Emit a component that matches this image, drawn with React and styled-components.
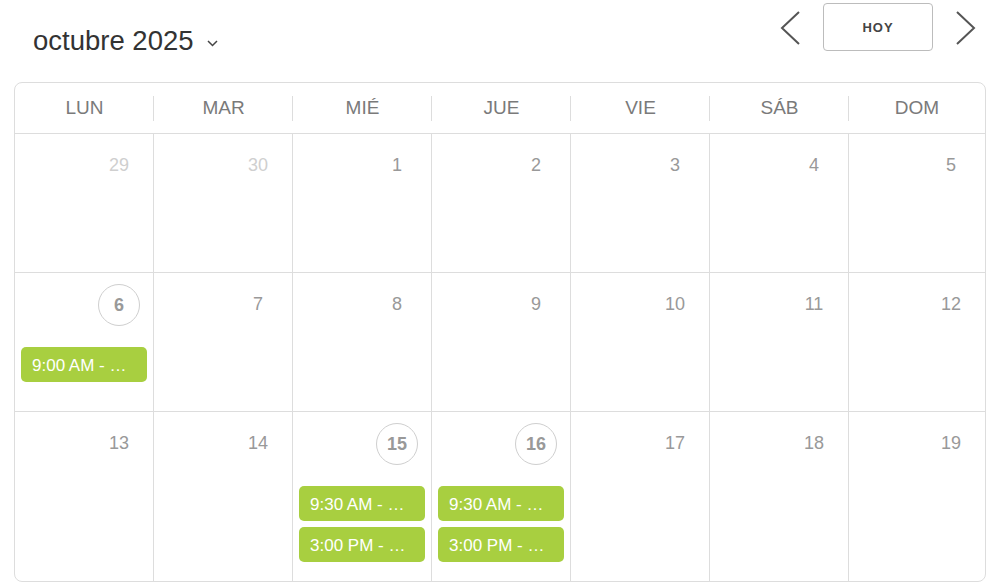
import React from "react";
import styled, { createGlobalStyle } from "styled-components";

const GlobalStyle = createGlobalStyle`
  body {
    margin: 0;
    background: #fff;
    font-family: "Liberation Sans", Arial, sans-serif;
  }
`;

// Page wrapper
const Page = styled.div`
  padding: 0 6px 0 14px;
`;

// Top bar with month title and navigation
const Toolbar = styled.div`
  display: flex;
  justify-content: space-between;
  align-items: flex-start;
  height: 82px;
  padding: 0 9px 0 19px;
`;

const MonthTitle = styled.div`
  display: flex;
  align-items: center;
  gap: 13px;
  margin-top: 25px;
  font-size: 27.5px;
  line-height: 32px;
  color: #333;
  cursor: pointer;

  svg {
    margin-top: 4px;
  }
`;

const Nav = styled.div`
  display: flex;
  align-items: center;
  gap: 22px;
  margin-top: 3px;
`;

const ArrowButton = styled.button`
  display: flex;
  padding: 0;
  border: none;
  background: none;
  cursor: pointer;
  margin-top: 2px;
`;

const TodayButton = styled.button`
  width: 110px;
  height: 48px;
  border: 1px solid #bcbcbc;
  border-radius: 4px;
  background: #fff;
  font-family: "Liberation Sans", Arial, sans-serif;
  font-size: 13px;
  font-weight: bold;
  letter-spacing: 1px;
  color: #444;
  cursor: pointer;
`;

// Calendar grid
const Calendar = styled.div`
  border: 1px solid #ddd;
  border-radius: 8px;
  overflow: hidden;
`;

const columns = "repeat(6, 139px) minmax(0, 1fr)";

const HeaderRow = styled.div`
  display: grid;
  grid-template-columns: ${columns};
  height: 50px;
  border-bottom: 1px solid #ddd;
`;

const HeaderCell = styled.div`
  position: relative;
  display: flex;
  align-items: center;
  justify-content: center;
  font-size: 19px;
  color: #7a7a7a;

  &:not(:first-child)::before {
    content: "";
    position: absolute;
    left: -1px;
    top: 13px;
    height: 25px;
    border-left: 1px solid #ddd;
  }
`;

const Week = styled.div`
  display: grid;
  grid-template-columns: ${columns};
  border-bottom: 1px solid #ddd;

  &:last-child {
    border-bottom: none;
  }
`;

const DayCell = styled.div`
  display: flex;
  flex-direction: column;
  min-width: 0;
  min-height: 138px;
  padding: 11px 6px 19px;
  box-sizing: border-box;
  border-right: 1px solid #ddd;

  &:last-child {
    border-right: none;
  }
`;

const DayNumber = styled.div`
  align-self: flex-end;
  display: flex;
  align-items: center;
  justify-content: center;
  width: 42px;
  height: 42px;
  margin-right: 7px;
  box-sizing: border-box;
  border-radius: 50%;
  font-size: 18px;
  color: ${(p) => (p.$muted ? "#cfcfcf" : "#999")};
  border: 1px solid ${(p) => (p.$busy ? "#cfcfcf" : "transparent")};
  font-weight: ${(p) => (p.$busy ? "bold" : "normal")};
  margin-top: ${(p) => (p.$busy ? "0" : "-1px")};
`;

const Events = styled.div`
  display: flex;
  flex-direction: column;
  gap: 6px;
  margin-top: 21px;
`;

const Event = styled.div`
  height: 35px;
  box-sizing: border-box;
  padding: 3px 11px 0;
  line-height: 32px;
  border-radius: 5px;
  background: #a8cf40;
  color: #fff;
  font-size: 17px;
  white-space: nowrap;
  overflow: hidden;
  text-overflow: ellipsis;
  cursor: pointer;
`;

const ChevronLeft = () => (
  <svg width="22" height="36" viewBox="0 0 22 36" fill="none">
    <path d="M20 2 L3 18 L20 34" stroke="#555" strokeWidth="2" />
  </svg>
);

const ChevronRight = () => (
  <svg width="22" height="36" viewBox="0 0 22 36" fill="none">
    <path d="M2 2 L19 18 L2 34" stroke="#555" strokeWidth="2" />
  </svg>
);

const Caret = () => (
  <svg width="11" height="7" viewBox="0 0 11 7" fill="none">
    <path d="M1 1 L5.5 5.5 L10 1" stroke="#444" strokeWidth="1.5" />
  </svg>
);

const days = ["LUN", "MAR", "MIÉ", "JUE", "VIE", "SÁB", "DOM"];

const weeks = [
  [
    { n: 29, muted: true },
    { n: 30, muted: true },
    { n: 1 },
    { n: 2 },
    { n: 3 },
    { n: 4 },
    { n: 5 },
  ],
  [
    { n: 6, events: ["9:00 AM - …"] },
    { n: 7 },
    { n: 8 },
    { n: 9 },
    { n: 10 },
    { n: 11 },
    { n: 12 },
  ],
  [
    { n: 13 },
    { n: 14 },
    { n: 15, events: ["9:30 AM - …", "3:00 PM - …"] },
    { n: 16, events: ["9:30 AM - …", "3:00 PM - …"] },
    { n: 17 },
    { n: 18 },
    { n: 19 },
  ],
];

export default function App() {
  return (
    <Page>
      <GlobalStyle />
      <Toolbar>
        <MonthTitle>
          octubre 2025
          <Caret />
        </MonthTitle>
        <Nav>
          <ArrowButton aria-label="Anterior">
            <ChevronLeft />
          </ArrowButton>
          <TodayButton>HOY</TodayButton>
          <ArrowButton aria-label="Siguiente">
            <ChevronRight />
          </ArrowButton>
        </Nav>
      </Toolbar>
      <Calendar>
        <HeaderRow>
          {days.map((d) => (
            <HeaderCell key={d}>{d}</HeaderCell>
          ))}
        </HeaderRow>
        {weeks.map((week, i) => (
          <Week key={i}>
            {week.map((day) => (
              <DayCell key={day.n}>
                <DayNumber $muted={day.muted} $busy={!!day.events}>
                  {day.n}
                </DayNumber>
                {day.events && (
                  <Events>
                    {day.events.map((e) => (
                      <Event key={e}>{e}</Event>
                    ))}
                  </Events>
                )}
              </DayCell>
            ))}
          </Week>
        ))}
      </Calendar>
    </Page>
  );
}
